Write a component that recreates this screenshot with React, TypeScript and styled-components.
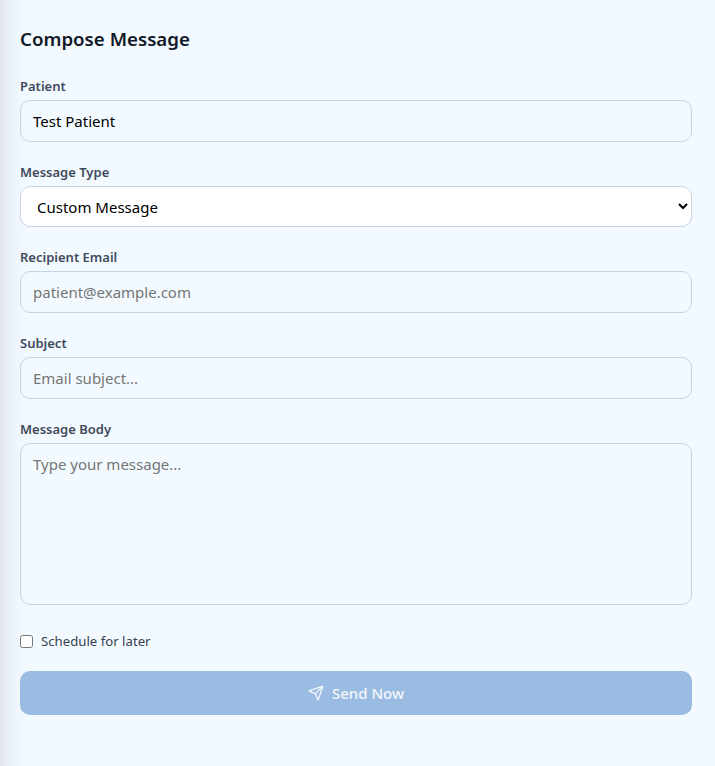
import React from "react";
import styled, { createGlobalStyle } from "styled-components";
import { Send } from "lucide-react";

const Global = createGlobalStyle`
  html, body { margin: 0; padding: 0; height: 100%; }
  body { font-family: "Noto Sans", "Open Sans", sans-serif; background: #f3faff; }
  * { box-sizing: border-box; }
`;

const Panel = styled.div`
  width: 715px;
  height: 766px;
  overflow: hidden;
  padding: 26px 23px 0 20px;
  background: linear-gradient(90deg, #e1e6ee 0, #e8edf5 7px, #eff5fc 16px, #f3faff 30px);
`;

const Title = styled.h2`
  margin: 0 0 28px;
  height: 25px;
  font-size: 18.7px;
  line-height: 25px;
  font-weight: 600;
  color: #111827;
`;

const Field = styled.div`
  display: flex;
  flex-direction: column;
  margin-bottom: 23px;
  &:last-of-type { margin-bottom: 0; }
`;

const Label = styled.label`
  height: 14px;
  margin-bottom: 7px;
  font-size: 13px;
  line-height: 14px;
  font-weight: 600;
  color: #3f4a5c;
`;

const controlStyles = `
  width: 100%;
  border: 1px solid #c8d3e4;
  border-radius: 10px;
  font-family: inherit;
  font-size: 15px;
  color: #000;
  outline: none;
  &::placeholder { color: #757575; opacity: 1; }
`;

const Input = styled.input`
  ${controlStyles}
  height: 42px;
  padding: 0 12px;
  background: transparent;
`;

const Select = styled.select`
  ${controlStyles}
  height: 41px;
  padding: 0 12px;
  background: #fff;
`;

const TextArea = styled.textarea`
  ${controlStyles}
  display: block;
  height: 162px;
  padding: 10px 12px;
  background: transparent;
  resize: none;
`;

const CheckRow = styled.label`
  display: flex;
  align-items: center;
  gap: 8px;
  margin-top: 29px;
  height: 14px;
  font-size: 13.2px;
  color: #374151;
`;

const Check = styled.input`
  width: 13px;
  height: 13px;
  margin: 0;
`;

const SendButton = styled.button`
  display: flex;
  align-items: center;
  justify-content: center;
  gap: 8px;
  width: 100%;
  height: 44px;
  margin-top: 23px;
  border: 0;
  border-radius: 10px;
  background: #9bbce2;
  color: #f3f7fc;
  font-family: inherit;
  font-size: 15px;
  font-weight: 500;
`;

export default function App() {
  return (
    <>
      <Global />
      <Panel>
        <Title>Compose Message</Title>
        <Field>
          <Label>Patient</Label>
          <Input defaultValue="Test Patient" />
        </Field>
        <Field>
          <Label>Message Type</Label>
          <Select defaultValue="Custom Message">
            <option>Custom Message</option>
          </Select>
        </Field>
        <Field>
          <Label>Recipient Email</Label>
          <Input placeholder="patient@example.com" />
        </Field>
        <Field>
          <Label>Subject</Label>
          <Input placeholder="Email subject..." />
        </Field>
        <Field>
          <Label>Message Body</Label>
          <TextArea placeholder="Type your message..." />
        </Field>
        <CheckRow>
          <Check type="checkbox" />
          Schedule for later
        </CheckRow>
        <SendButton type="button">
          <Send size={16} strokeWidth={1.9} />
          Send Now
        </SendButton>
      </Panel>
    </>
  );
}
